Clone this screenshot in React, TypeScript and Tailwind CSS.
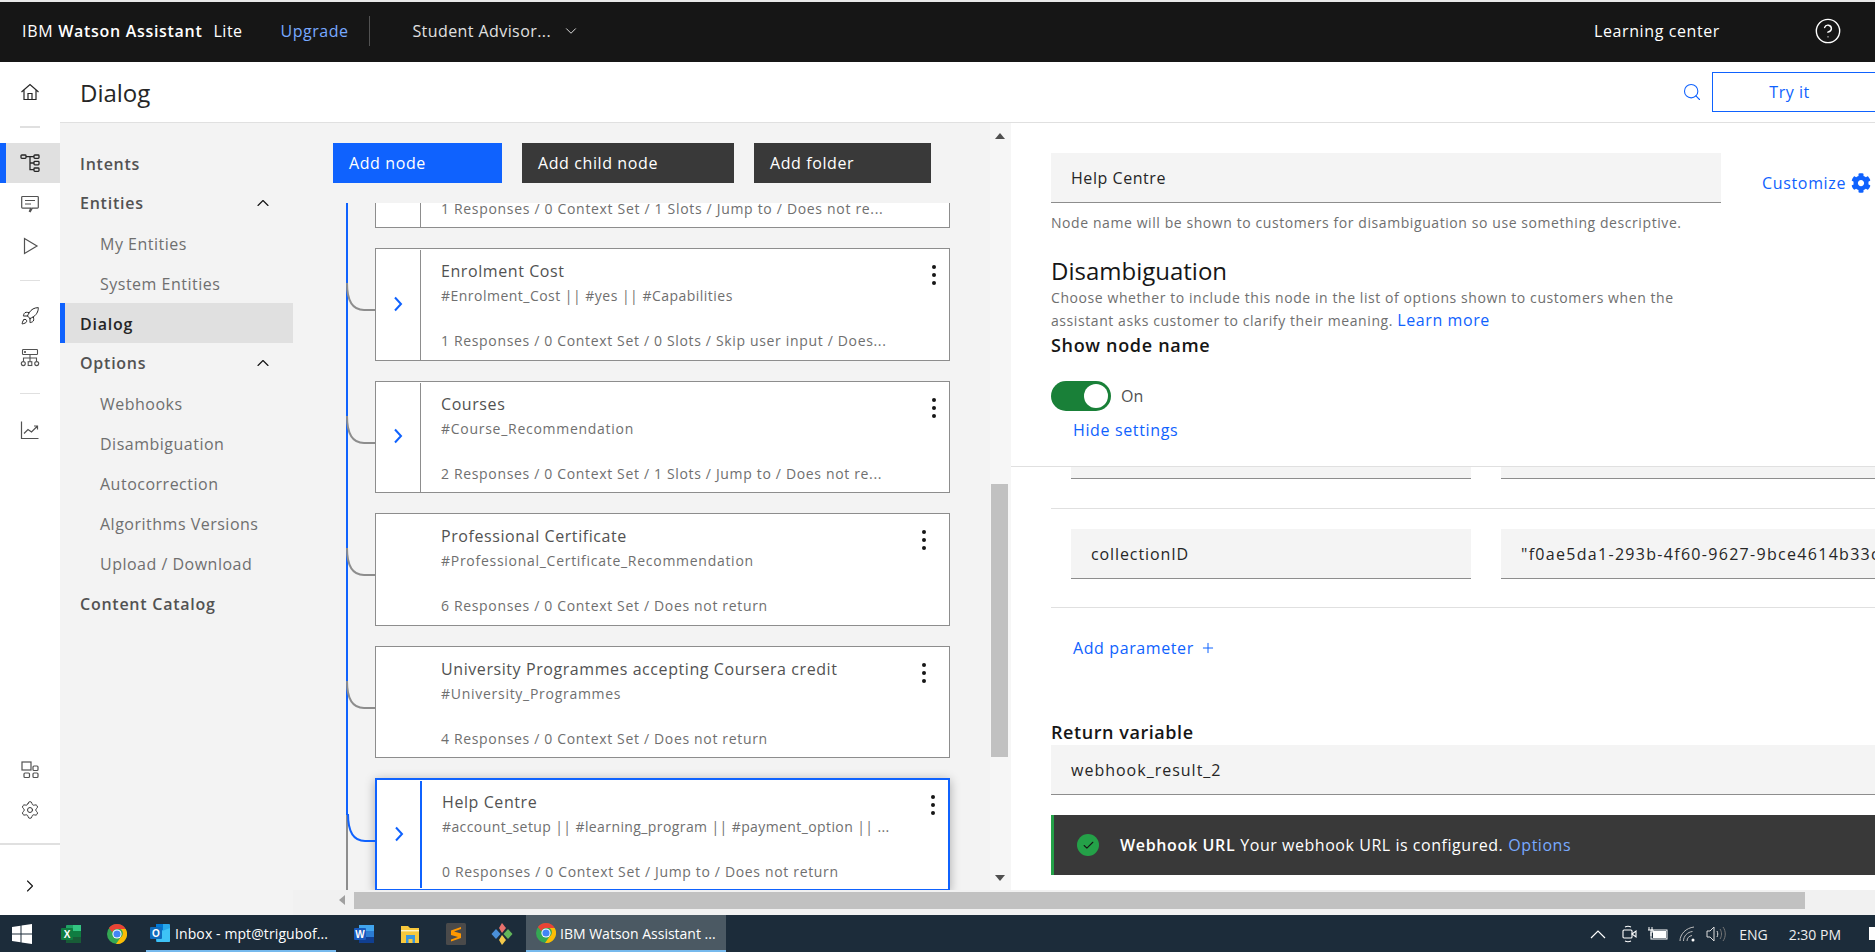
import React from "react";
import { ChevronDown, ChevronUp, ChevronRight, Search, Plus, CircleHelp, Rocket, Settings, Check } from "lucide-react";
import { FaCog } from "react-icons/fa";

const IconHome = () => (
  <svg width="20" height="20" viewBox="0 0 20 20" fill="none" stroke="#262626" strokeWidth="1.2">
    <path d="M1.500 10 10 2.500 18.500 10M4 8v9.500h12V8M8 17.500v-6h4v6" />
  </svg>
);
const IconTree = () => (
  <svg width="20" height="20" viewBox="0 0 20 20" fill="none" stroke="#262626" strokeWidth="1.3">
    <rect x="1" y="2" width="5" height="3.400" rx="0.8" />
    <rect x="14" y="2" width="5" height="3.400" rx="0.8" />
    <rect x="14" y="8.400" width="5" height="3.400" rx="0.8" />
    <rect x="14" y="15" width="5" height="3.400" rx="0.8" />
    <path d="M6 3.700h8M10 3.700v13h4M10 10h4" />
  </svg>
);
const IconChat = () => (
  <svg width="20" height="20" viewBox="0 0 20 20" fill="none" stroke="#525252" strokeWidth="1.2">
    <path d="M2.500 2.500h15a.8.8 0 0 1 .8.8v10a.8.8 0 0 1-.8.8h-5.200l-2 3.600-.9-.5 1.400-3.100H2.500a.8.8 0 0 1-.8-.8v-10a.8.8 0 0 1 .8-.8Z" />
    <path d="M5 6.500h10M5 10h6" />
  </svg>
);
const IconPlay = () => (
  <svg width="20" height="20" viewBox="0 0 20 20" fill="none" stroke="#525252" strokeWidth="1.2">
    <path d="M4.500 2.500v15L17 10Z" />
  </svg>
);
const IconOrg = () => (
  <svg width="20" height="20" viewBox="0 0 20 20" fill="none" stroke="#525252" strokeWidth="1.1">
    <rect x="2.500" y="1.500" width="15" height="5" rx="0.8" />
    <circle cx="5" cy="4" r="0.5" fill="#525252" />
    <path d="M10 6.500v7M3.500 13v-3h13v3" />
    <circle cx="3.300" cy="15.600" r="2" />
    <rect x="8.200" y="13.700" width="3.600" height="3.800" />
    <circle cx="16.700" cy="15.600" r="2" />
  </svg>
);
const IconChart = () => (
  <svg width="20" height="20" viewBox="0 0 20 20" fill="none" stroke="#525252" strokeWidth="1.2">
    <path d="M1.500 1.500v17h17" />
    <path d="M4 13.500 8 9.500l3.500 2.500 6-6M14 6h3.500v3.500" />
  </svg>
);
const IconApps = () => (
  <svg width="20" height="20" viewBox="0 0 20 20" fill="none" stroke="#525252" strokeWidth="1.2">
    <rect x="2" y="2" width="9" height="8" />
    <rect x="13" y="6" width="5" height="4.500" rx="1" />
    <rect x="4" y="13" width="5.500" height="4.500" rx="1" />
    <rect x="13" y="13" width="5" height="4.500" rx="1" />
  </svg>
);

const RailDivider = () => <div className="h-px w-5 bg-[#e0e0e0]" />;

function Rail() {
  return (
    <div className="flex w-[60px] shrink-0 flex-col bg-white">
      <div className="flex h-[60px] items-center justify-center"><IconHome /></div>
      <div className="flex h-[21px] items-start justify-center pt-[4px]"><div className="h-[2px] w-5 bg-[#e0e0e0]" /></div>
      <div className="flex h-10 items-center justify-center border-l-[6px] border-[#0f62fe] bg-[#e0e0e0] pr-[6px]"><IconTree /></div>
      <div className="flex h-[42px] items-center justify-center"><IconChat /></div>
      <div className="flex h-[42px] items-center justify-center"><IconPlay /></div>
      <div className="flex h-[27px] items-center justify-center"><RailDivider /></div>
      <div className="flex h-[44px] items-center justify-center"><Rocket size={20} strokeWidth={1.2} color="#262626" /></div>
      <div className="flex h-[40px] items-center justify-center"><IconOrg /></div>
      <div className="flex h-[30px] items-center justify-center"><RailDivider /></div>
      <div className="flex h-[44px] items-center justify-center"><IconChart /></div>
      <div className="flex-1" />
      <div className="flex h-[40px] items-center justify-center"><IconApps /></div>
      <div className="flex h-[40px] items-center justify-center"><Settings size={20} strokeWidth={1.2} color="#393939" /></div>
      <div className="mt-[13px] h-[2px] bg-[#e0e0e0]" />
      <div className="flex h-[70px] items-center justify-center pt-[12px]"><ChevronRight size={20} strokeWidth={1.3} color="#161616" /></div>
    </div>
  );
}

const Group = ({ children }: { children: string }) => (
  <div className="flex h-10 items-center justify-between pl-5 pr-[20px] text-[16px] font-semibold tracking-[0.75px] text-[#525252]">
    {children}
    <ChevronUp size={20} strokeWidth={1.4} color="#161616" />
  </div>
);
const Sub = ({ children }: { children: string }) => (
  <div className="flex h-10 items-center pl-10 pt-[1px] text-[16px] tracking-[0.5px] text-[#6f6f6f]">{children}</div>
);

function Sidebar() {
  return (
    <div className="w-[233px] shrink-0 pt-5">
      <div className="flex h-10 items-center pl-5 pt-[1px] text-[16px] font-semibold tracking-[0.75px] text-[#525252]">Intents</div>
      <Group>Entities</Group>
      <Sub>My Entities</Sub>
      <Sub>System Entities</Sub>
      <div className="flex h-10 items-center border-l-[5px] border-[#0f62fe] bg-[#e0e0e0] pl-[15px] pt-[1px] text-[16px] font-semibold tracking-[0.75px] text-[#262626]">Dialog</div>
      <Group>Options</Group>
      <Sub>Webhooks</Sub>
      <Sub>Disambiguation</Sub>
      <Sub>Autocorrection</Sub>
      <Sub>Algorithms Versions</Sub>
      <Sub>Upload / Download</Sub>
      <div className="flex h-10 items-center pl-5 pt-[1px] text-[16px] font-semibold tracking-[0.75px] text-[#525252]">Content Catalog</div>
    </div>
  );
}

const Kebab = () => (
  <svg width="4" height="20" viewBox="0 0 4 20" fill="#161616">
    <circle cx="2" cy="2" r="2" />
    <circle cx="2" cy="10" r="2" />
    <circle cx="2" cy="18" r="2" />
  </svg>
);

const NodeChevron = () => (
  <svg width="10" height="16" viewBox="0 0 10 16" fill="none" stroke="#0f62fe" strokeWidth="2">
    <path d="M2 1.500 8 8l-6 6.500" />
  </svg>
);

type CardProps = { title: string; tag: string; foot: string; chevron?: boolean; selected?: boolean; tagClass?: string };

function Card({ title, tag, foot, chevron = true, selected = false, tagClass = "tracking-[0.72px]" }: CardProps) {
  const c = selected ? "#0f62fe" : "#8d8d8d";
  return (
    <div className={`relative h-[112.5px] w-[575px] shrink-0 bg-white ${selected ? "border-2 border-[#0f62fe] shadow-[0_2px_10px_rgba(0,0,0,0.3)]" : "border border-[#8d8d8d]"}`}>
      <svg className="absolute left-[-30px] top-[34px]" width="30" height="30" fill="none" stroke={c} strokeWidth="2">
        <path d="M1 0c0 18 6 27 17 27h12" />
      </svg>
      <div className="flex h-full">
        <div className={`flex w-[45px] shrink-0 items-center justify-center ${chevron ? (selected ? "my-[1px] border-r-2 border-[#0f62fe]" : "mt-[1px] border-r border-[#8d8d8d] pb-[2px]") : ""}`}>
          {chevron && <NodeChevron />}
        </div>
        <div className="min-w-0 flex-1 whitespace-nowrap pl-5 pt-[10px]">
          <div className="h-[24px] text-[16px] leading-[24px] tracking-[0.58px] text-[#525252]">{title}</div>
          <div className={`mt-[3px] h-5 text-[14px] leading-5 text-[#6f6f6f] ${tagClass}`}>{tag}</div>
          <div className="mt-[25px] h-5 text-[14px] leading-5 tracking-[0.66px] text-[#6f6f6f]">{foot}</div>
        </div>
      </div>
      <div className={`absolute ${selected ? "top-[15px]" : "top-[16px]"} ${chevron ? "right-[13px]" : "right-[23px]"}`}><Kebab /></div>
    </div>
  );
}

function Canvas() {
  return (
    <div className="relative w-[718px] shrink-0 overflow-hidden">
      <div className="flex h-[80px] gap-5 pl-10 pt-5 text-[16px] tracking-[0.6px] text-white">
        <div className="flex h-10 w-[169px] items-center bg-[#0f62fe] pl-4">Add node</div>
        <div className="flex h-10 w-[212px] items-center bg-[#393939] pl-4">Add child node</div>
        <div className="flex h-10 w-[177px] items-center bg-[#393939] pl-4">Add folder</div>
      </div>
      <div className="relative flex h-[688px] flex-col gap-5 overflow-hidden pl-[82px]">
        <div className="absolute left-[53px] top-0 h-[612px] w-[2px] bg-[#0f62fe]" />
        <div className="absolute left-[53px] top-[612px] h-[76px] w-[2px] bg-[#8d8d8d]" />
        <div className="flex h-[25px] w-[575px] shrink-0 border border-t-0 border-[#8d8d8d] bg-white">
          <div className="w-[45px] shrink-0 border-r border-[#8d8d8d]" />
          <div className="whitespace-nowrap pl-5 text-[14px] leading-[12px] tracking-[0.68px] text-[#6f6f6f]">1 Responses / 0 Context Set / 1 Slots / Jump to / Does not re...</div>
        </div>
        <Card title="Enrolment Cost" tag="#Enrolment_Cost || #yes || #Capabilities" tagClass="tracking-[0.48px]" foot="1 Responses / 0 Context Set / 0 Slots / Skip user input / Does..." />
        <Card title="Courses" tag="#Course_Recommendation" foot="2 Responses / 0 Context Set / 1 Slots / Jump to / Does not re..." />
        <Card title="Professional Certificate" tag="#Professional_Certificate_Recommendation" foot="6 Responses / 0 Context Set / Does not return" chevron={false} />
        <Card title="University Programmes accepting Coursera credit" tag="#University_Programmes" foot="4 Responses / 0 Context Set / Does not return" chevron={false} />
        <Card title="Help Centre" tag="#account_setup || #learning_program || #payment_option || ..." tagClass="tracking-[0.4px]" foot="0 Responses / 0 Context Set / Jump to / Does not return" selected />
      </div>
      <div className="absolute bottom-0 right-0 top-0 flex w-[21px] flex-col items-center bg-[#f6f6f6] pr-[2px]">
        <div className="mt-[10px] h-0 w-0 border-x-[5px] border-b-[6px] border-x-transparent border-b-[#505050]" />
        <div className="mt-[345px] h-[273px] w-[17px] bg-[#c1c1c1]" />
        <div className="mt-[118px] h-0 w-0 border-x-[5px] border-t-[6px] border-x-transparent border-t-[#505050]" />
      </div>
    </div>
  );
}

const Field = ({ children, className = "" }: { children: React.ReactNode; className?: string }) => (
  <div className={`flex h-[50px] items-center overflow-hidden whitespace-nowrap border-b border-[#8d8d8d] bg-[#f4f4f4] pl-5 text-[16px] text-[#262626] ${className}`}>{children}</div>
);

function Panel() {
  return (
    <div className="min-w-0 flex-1 overflow-hidden bg-white">
      <div className="h-[344px] border-b border-[#e0e0e0] pl-10 pt-[30px]">
        <div className="flex">
          <Field className="w-[670px] shrink-0 tracking-[0.55px]">Help Centre</Field>
          <div className="ml-[41px] mt-[20px] flex h-5 items-center gap-[5px] whitespace-nowrap text-[16px] tracking-[0.66px] text-[#0f62fe]">Customize <FaCog size={20} /></div>
        </div>
        <div className="mt-[10px] h-5 text-[14px] leading-5 tracking-[0.58px] text-[#6f6f6f]">Node name will be shown to customers for disambiguation so use something descriptive.</div>
        <div className="mt-[22px] h-[32px] text-[24px] leading-[32px] text-[#161616]">Disambiguation</div>
        <div className="w-[660px] text-[14px] leading-[22px] tracking-[0.58px] text-[#6f6f6f]">
          Choose whether to include this node in the list of options shown to customers when the assistant asks customer to clarify their meaning. <span className="text-[16px] tracking-[0.6px] text-[#0f62fe]">Learn more</span>
        </div>
        <div className="mt-[-1px] h-7 text-[18px] font-semibold leading-7 tracking-[0.68px] text-[#161616]">Show node name</div>
        <div className="mt-[22px] flex items-center gap-[10px]">
          <div className="flex h-[30px] w-[60px] items-center justify-end rounded-full bg-[#198038] pr-[3px]">
            <div className="h-6 w-6 rounded-full bg-white" />
          </div>
          <span className="text-[16px] text-[#525252]">On</span>
        </div>
        <div className="ml-[22px] mt-[8px] h-[22px] text-[16px] leading-[22px] tracking-[0.64px] text-[#0f62fe]">Hide settings</div>
      </div>
      <div className="flex h-[12px] gap-[30px] pl-[60px]">
        <div className="h-full w-[400px] shrink-0 border-b border-[#8d8d8d] bg-[#f4f4f4]" />
        <div className="h-full w-[400px] shrink-0 border-b border-[#8d8d8d] bg-[#f4f4f4]" />
      </div>
      <div className="ml-10 mt-[29px] h-[100px] border-y border-[#e0e0e0] pt-[20px]">
        <div className="flex gap-[30px] pl-5">
          <Field className="w-[400px] shrink-0 tracking-[0.9px]">collectionID</Field>
          <Field className="w-[400px] shrink-0 tracking-[1.3px]">"f0ae5da1-293b-4f60-9627-9bce4614b33c"</Field>
        </div>
      </div>
      <div className="ml-[62px] mt-[30px] flex h-5 items-center gap-[6px] text-[16px] tracking-[0.6px] text-[#0f62fe]">Add parameter <Plus size={16} strokeWidth={1.5} /></div>
      <div className="ml-10 mt-[62px] h-[24px] text-[18px] font-semibold leading-[24px] tracking-[0.56px] text-[#161616]">Return variable</div>
      <Field className="ml-10 mt-[1px] tracking-[1px]">webhook_result_2</Field>
      <div className="ml-10 mt-[20px] flex h-[60px] items-center whitespace-nowrap border-l-[3px] border-[#24a148] bg-[#393939] pl-[23px] text-[16px] text-white">
        <div className="flex h-[22px] w-[22px] items-center justify-center rounded-full bg-[#24a148]"><Check size={13} strokeWidth={2} color="#161616" /></div>
        <span className="ml-[21px] font-semibold tracking-[0.65px]">Webhook URL</span>
        <span className="ml-[5px] tracking-[0.54px]">Your webhook URL is configured.</span>
        <span className="ml-[5px] tracking-[0.54px] text-[#78a9ff]">Options</span>
      </div>
    </div>
  );
}

const WinLogo = () => (
  <svg width="20" height="20" viewBox="0 0 20 20" fill="#fff">
    <path d="M0 3 8.500 1.800v7.600H0ZM9.500 1.600 20 0v9.400H9.500ZM0 10.400h8.500v7.800L0 17ZM9.500 10.400H20V20l-10.500-1.600Z" />
  </svg>
);
const Excel = () => (
  <svg width="20" height="20" viewBox="0 0 20 20">
    <rect x="5" y="1" width="15" height="18" rx="1" fill="#21a366" />
    <rect x="12" y="1" width="8" height="6" fill="#33c481" />
    <rect x="12" y="7" width="8" height="6" fill="#107c41" />
    <rect x="5" y="13" width="15" height="6" fill="#185c37" />
    <rect x="0" y="4" width="12" height="12" rx="1" fill="#107c41" />
    <text x="6" y="13.500" fontSize="10" fontWeight="700" fill="#fff" textAnchor="middle" fontFamily="Liberation Sans">X</text>
  </svg>
);
const Chrome = () => (
  <svg width="20" height="20" viewBox="0 0 20 20">
    <circle cx="10" cy="10" r="10" fill="#34a853" />
    <path d="M10 0a10 10 0 0 1 8.660 5H10a5 5 0 0 0-4.700 3.300L1.900 4.100A10 10 0 0 1 10 0Z" fill="#ea4335" />
    <path d="M18.660 5A10 10 0 0 1 9 19.950L13.500 13.500a5 5 0 0 0 0-8.500Z" fill="#fbbc05" />
    <circle cx="10" cy="10" r="4.600" fill="#fff" />
    <circle cx="10" cy="10" r="3.600" fill="#4285f4" />
  </svg>
);
const Outlook = () => (
  <svg width="20" height="20" viewBox="0 0 20 20">
    <rect x="6" y="1" width="14" height="18" rx="1" fill="#28a8ea" />
    <rect x="6" y="1" width="7" height="6" fill="#0078d4" />
    <path d="M7 10l13-5v13a1 1 0 0 1-1 1H7Z" fill="#50d9ff" opacity="0.55" />
    <rect x="0" y="4" width="12" height="12" rx="1" fill="#0f6cbd" />
    <text x="6" y="13.500" fontSize="10" fontWeight="700" fill="#fff" textAnchor="middle" fontFamily="Liberation Sans">O</text>
  </svg>
);
const Word = () => (
  <svg width="20" height="20" viewBox="0 0 20 20">
    <rect x="5" y="1" width="15" height="18" rx="1" fill="#2b7cd3" />
    <rect x="5" y="1" width="15" height="6" fill="#41a5ee" />
    <rect x="5" y="13" width="15" height="6" fill="#103f91" />
    <rect x="0" y="4" width="12" height="12" rx="1" fill="#185abd" />
    <text x="6" y="13.500" fontSize="10" fontWeight="700" fill="#fff" textAnchor="middle" fontFamily="Liberation Sans">W</text>
  </svg>
);
const Folder = () => (
  <svg width="20" height="20" viewBox="0 0 20 20">
    <path d="M1 2h7l2 2h9v15H1Z" fill="#f8c83c" />
    <rect x="1" y="6" width="18" height="1.400" fill="#fff3c4" />
    <rect x="6" y="11" width="9" height="8" fill="#3a96dd" />
    <rect x="8.500" y="15" width="4" height="4" fill="#f8c83c" />
  </svg>
);
const Sublime = () => (
  <svg width="20" height="22" viewBox="0 0 20 22">
    <rect x="0" y="0" width="20" height="22" rx="1.500" fill="#4a4a4a" />
    <path d="M15 4 5 7.500v4.400l7 2.200L5 16.500v2l10-3.600v-4.300L8 8.400l7-2.400Z" fill="#ff9800" />
  </svg>
);
const Git = () => (
  <svg width="22" height="22" viewBox="0 0 22 22">
    <path d="M11 0l4 5-4 5-3-5Z" fill="#e8716d" />
    <path d="M5 6l4.500 5L5 16 .5 11Z" fill="#4a90d9" />
    <path d="M17 6l4.500 5-4.500 5-4.500-5Z" fill="#63b65a" />
    <path d="M11 12l4 5-4 5-3-5Z" fill="#f3c94b" />
  </svg>
);

function Taskbar() {
  const slot = "flex h-full shrink-0 items-center justify-center";
  return (
    <div className="flex h-[37px] shrink-0 items-center bg-[#1c2c3a] font-['Open_Sans',sans-serif] text-[14px] text-white">
      <div className={`${slot} w-[44px]`}><WinLogo /></div>
      <div className={`${slot} w-[54px]`}><Excel /></div>
      <div className={`${slot} w-[38px]`}><Chrome /></div>
      <div className="ml-[10px] flex h-full w-[190px] shrink-0 items-center border-b-2 border-[#76b9ed] pl-[4px]">
        <Outlook />
        <span className="ml-[5px] mt-[2px] whitespace-nowrap tracking-[0.1px]">Inbox - mpt@trigubof...</span>
      </div>
      <div className={`${slot} w-[56px]`}><Word /></div>
      <div className={`${slot} w-[36px]`}><Folder /></div>
      <div className={`${slot} w-[56px]`}><Sublime /></div>
      <div className={`${slot} w-[36px]`}><Git /></div>
      <div className="ml-[6px] flex h-full w-[200px] shrink-0 items-center border-b-2 border-[#76b9ed] bg-[#4b5963] pl-[10px]">
        <Chrome />
        <span className="ml-[4px] mt-[2px] whitespace-nowrap">IBM Watson Assistant ...</span>
      </div>
      <div className="flex-1" />
      <svg className="mr-[16px]" width="16" height="10" viewBox="0 0 16 10" fill="none" stroke="#fff" strokeWidth="1.2"><path d="M1 9 8 2l7 7" /></svg>
      <svg className="mr-[11px]" width="15" height="20" viewBox="0 0 15 20" fill="none" stroke="#fff" strokeWidth="1.1"><rect x="1" y="6" width="9" height="8" rx="1" /><path d="m10 10 4-3v6ZM3 3c2-1 4-1 6 0M3 17c2 1 4 1 6 0" /></svg>
      <svg className="mr-[11px]" width="20" height="14" viewBox="0 0 20 14"><rect x="3" y="3" width="16" height="9" fill="none" stroke="#fff" /><rect x="5" y="4" width="13" height="7" fill="#fff" /><path d="M1 0v3M4 0v3M0 3h5v2H3v4" stroke="#fff" fill="none" /></svg>
      <svg className="mr-[11px]" width="16" height="16" viewBox="0 0 16 16" fill="none" stroke="#bbb" strokeWidth="1"><path d="M1 15C1 8 7 2 15 1M4.500 15c0-5 4-9 9-9.500M8 15c0-3 2-5 5-5.500" /><circle cx="14" cy="14" r="1.500" fill="#fff" stroke="none" /></svg>
      <svg className="mr-[13px]" width="20" height="16" viewBox="0 0 20 16" fill="none" stroke="#ddd" strokeWidth="1"><path d="M1 5h3l4-4v14l-4-4H1Z" /><path d="M11 5c1 2 1 4 0 6" /><path d="M14 3c2 3 2 7 0 10M17 1c3 4 3 10 0 14" stroke="#777" /></svg>
      <span className="mr-[21px] mt-[2px] text-[14px] text-[#eee]">ENG</span>
      <span className="mr-[28px] mt-[2px] text-[14px] text-[#eee]">2:30 PM</span>
      <div className="h-[13px] w-[6px] bg-white" />
    </div>
  );
}

export default function App() {
  return (
    <div className="flex h-[952px] w-[1875px] flex-col overflow-hidden bg-white font-['Open_Sans',sans-serif]">
      <div className="h-[2px] shrink-0 bg-[#e8e8e8]" />
      <div className="flex h-[60px] shrink-0 items-center bg-[#161616] pb-[2px] pl-[22px] text-[16px] text-white">
        <span className="tracking-[0.7px]">IBM <span className="font-semibold">Watson Assistant</span></span>
        <span className="ml-[11px] tracking-[0.5px]">Lite</span>
        <span className="ml-[38px] tracking-[0.5px] text-[#78a9ff]">Upgrade</span>
        <div className="ml-[21px] h-[30px] w-px bg-[#525252]" />
        <span className="ml-[42px] tracking-[0.42px] text-[#e0e0e0]">Student Advisor...</span>
        <ChevronDown className="ml-[11px]" size={18} strokeWidth={1.3} color="#e0e0e0" />
        <div className="flex-1" />
        <span className="tracking-[0.6px]">Learning center</span>
        <CircleHelp className="ml-[94px] mr-[33px]" size={28} strokeWidth={1.2} color="#fff" />
      </div>
      <div className="flex min-h-0 flex-1">
        <Rail />
        <div className="flex min-w-0 flex-1 flex-col">
          <div className="flex h-[61px] shrink-0 items-center overflow-hidden border-b border-[#e0e0e0] pl-5">
            <span className="pt-[2px] text-[24px] text-[#262626]">Dialog</span>
            <div className="flex-1" />
            <Search size={20} strokeWidth={1.3} color="#0f62fe" />
            <div className="ml-[10px] mr-[-2px] flex h-10 w-[165px] items-center justify-center border border-[#0f62fe] pr-[10px] text-[16px] tracking-[0.5px] text-[#0f62fe]">Try it</div>
          </div>
          <div className="flex min-h-0 flex-1 bg-[#f3f3f3]">
            <Sidebar />
            <div className="flex min-w-0 flex-1 flex-col">
              <div className="flex min-h-0 flex-1">
                <Canvas />
                <Panel />
              </div>
              <div className="flex h-[25px] shrink-0 items-start bg-[#f1f1f1] pl-[46px] pt-[2px]">
                <div className="mt-[3px] h-0 w-0 border-y-[5px] border-r-[6px] border-y-transparent border-r-[#a0a0a0]" />
                <div className="ml-[9px] h-[17px] w-[1451px] bg-[#c1c1c1]" />
              </div>
            </div>
          </div>
        </div>
      </div>
      <Taskbar />
    </div>
  );
}
